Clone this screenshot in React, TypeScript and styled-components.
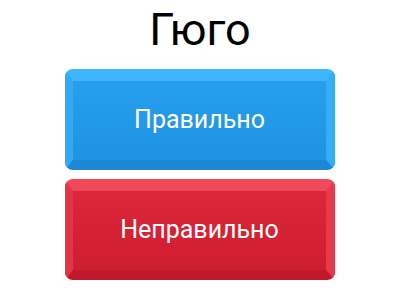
import styled, { createGlobalStyle } from "styled-components";

const GlobalStyle = createGlobalStyle`
  html, body {
    margin: 0;
    padding: 0;
    background: #ffffff;
  }
  body {
    font-family: Roboto, "Noto Sans", "Liberation Sans", sans-serif;
  }
`;

type Tone = "blue" | "red";

const palette = {
  blue: {
    top: "#3fb6fa",
    left: "#33aaf3",
    right: "#35acf4",
    bottom: "#1b88d6",
    faceTop: "#269fee",
    faceBottom: "#1f93e3",
  },
  red: {
    top: "#f0495c",
    left: "#e43547",
    right: "#e8394c",
    bottom: "#c0192b",
    faceTop: "#da2739",
    faceBottom: "#cf1e30",
  },
};

export default function App() {
  return (
    <>
      <GlobalStyle />
      <Screen>
        <Title>Гюго</Title>
        <Buttons>
          <AnswerButton $tone="blue">
            <Face $tone="blue">Правильно</Face>
          </AnswerButton>
          <AnswerButton $tone="red">
            <Face $tone="red">Неправильно</Face>
          </AnswerButton>
        </Buttons>
      </Screen>
    </>
  );
}

const Screen = styled.div`
  width: 400px;
  height: 300px;
  display: flex;
  flex-direction: column;
  align-items: center;
  padding-top: 3px;
  box-sizing: border-box;
`;

const Title = styled.div`
  font-size: 45px;
  line-height: 53px;
  color: #000000;
`;

const Buttons = styled.div`
  display: flex;
  flex-direction: column;
  gap: 9px;
  margin-top: 13px;
`;

const AnswerButton = styled.div<{ $tone: Tone }>`
  width: 270px;
  height: 101px;
  box-sizing: border-box;
  border-style: solid;
  border-width: 12px 9px 10px 8px;
  border-top-color: ${(p) => palette[p.$tone].top};
  border-left-color: ${(p) => palette[p.$tone].left};
  border-right-color: ${(p) => palette[p.$tone].right};
  border-bottom-color: ${(p) => palette[p.$tone].bottom};
  border-radius: 8px;
  display: flex;
`;

const Face = styled.div<{ $tone: Tone }>`
  flex: 1;
  display: flex;
  align-items: center;
  justify-content: center;
  background: linear-gradient(
    to bottom,
    ${(p) => palette[p.$tone].faceTop},
    ${(p) => palette[p.$tone].faceBottom}
  );
  color: #ffffff;
  font-size: 25px;
  padding-bottom: 2px;
`;
